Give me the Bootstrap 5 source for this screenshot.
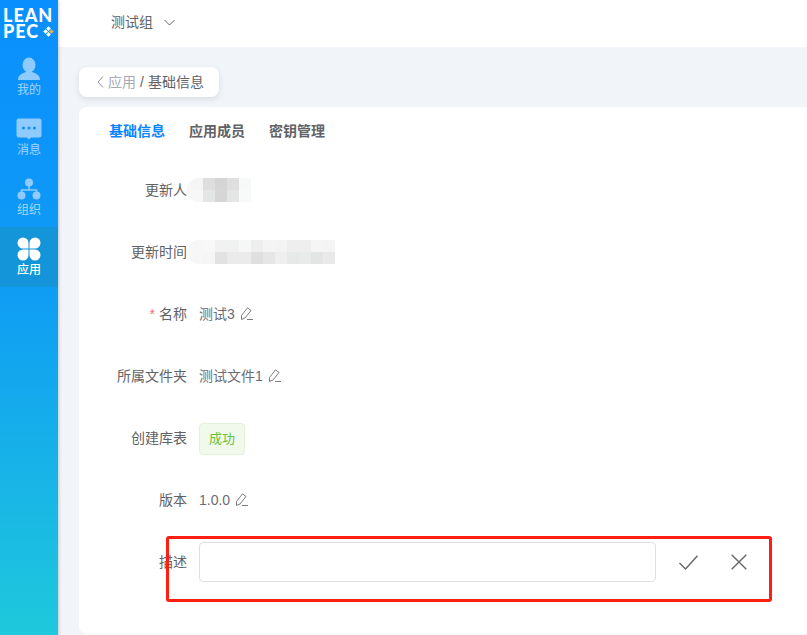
<!DOCTYPE html>
<html lang="zh">
<head>
<meta charset="utf-8">
<title>基础信息</title>
<link href="https://cdn.jsdelivr.net/npm/bootstrap@5.3.0/dist/css/bootstrap.min.css" rel="stylesheet">
<style>
html,body{height:100%;overflow:hidden}
body{font-family:"Liberation Sans","Noto Sans CJK SC",sans-serif;font-size:14px;line-height:20px;color:#606266;background:#f1f4f8}
.shell{height:635px}
.side{width:58px;flex:none;background:linear-gradient(180deg,#0a8ffe 0%,#0f9cf4 45%,#1fc8dc 100%);box-shadow:1px 0 3px rgba(0,0,0,.18);z-index:2}
.logo{height:47px;padding:7px 0 0 3px;color:#fff;font-family:"Lato","Liberation Sans",sans-serif;font-weight:900;font-size:18px;line-height:16px;letter-spacing:1px}
.logo-line{height:16px}
.snav{height:60px;padding-top:10px;color:#a5d5ff;font-size:12px;line-height:14px}
.snav svg{display:block;margin-bottom:2px}
.snav-on{background:#1495d9;color:#fff;font-weight:500}
.mainwrap{min-width:0}
.topbar{height:47px;padding:0 0 3px 53px;background:#fff;color:#606266}
.topbar svg{margin-left:11px}
.content{padding:20px 0 0 21px}
.crumb{height:30px;width:140px;padding:0 0 0 18px;background:#fff;border-radius:8px;box-shadow:0 2px 6px rgba(0,0,0,.1);margin-bottom:10px}
.crumb-link{color:#a8abb2;margin-left:4px}
.crumb-sep{margin:0 4px;color:#606266}
.panel{margin-right:-8px;background:#fff;border-radius:8px;height:527px;padding-left:30px}
.ptabs{height:52px;padding-bottom:4px;font-weight:700;gap:24px;color:#606266}
.ptab-on{color:#0a84ff}
.frow{height:62px;margin-left:-30px;position:relative}
.flabel{width:108px;flex:none;text-align:right;margin-right:12px}
.fval{color:#6b6d72}
.req{color:#f56c6c;margin-right:4px}
.pen{margin:0 0 2px 5px}
.stag{height:32px;width:46px;margin-top:2px;background:#f0f9eb;border:1px solid #e1f3d8;border-radius:4px;color:#67c23a;font-size:13px}
.finput{width:457px;height:40px;border:1px solid #dcdfe6;border-radius:4px;background:#fff;box-shadow:none}
.acts{margin-left:23px;gap:33px}
.redbox{position:absolute;left:87px;top:5px;width:606px;height:66px;border:3px solid #ff1e12;border-radius:3px;pointer-events:none}
.mosaic{display:grid;grid-template-rows:12px 12px;grid-auto-flow:column;grid-auto-columns:12px;margin-left:-12px;padding-left:4px;background:#f7f7f7;border-radius:12px 0 0 12px;overflow:hidden}
.mosaic i{display:block}
</style>
</head>
<body>
<div class="shell d-flex">
  <aside class="side d-flex flex-column">
    <div class="logo">
      <div class="logo-line">LEAN</div>
      <div class="logo-line d-flex align-items-center">PEC<svg width="11" height="11" viewBox="0 0 11 11" class="ms-1"><g transform="rotate(45 5.500 5.500)"><rect x="1.800" y="1.800" width="3.300" height="3.300" fill="#fff"/><rect x="5.900" y="1.800" width="3.300" height="3.300" fill="#f5b04a"/><rect x="1.800" y="5.900" width="3.300" height="3.300" fill="#fff"/><rect x="5.900" y="5.900" width="3.300" height="3.300" fill="#fff"/></g></svg></div>
    </div>
    <div class="snav d-flex flex-column align-items-center">
      <svg width="24" height="24" viewBox="0 0 24 24"><ellipse cx="12" cy="8" rx="6.500" ry="7.500" fill="#8fcbff"/><path d="M1 23c0-5 4-6.500 8-8h6c4 1.500 8 3 8 8z" fill="#8fcbff"/></svg>
      <span>我的</span>
    </div>
    <div class="snav d-flex flex-column align-items-center">
      <svg width="26" height="24" viewBox="0 0 26 24"><path d="M3 1.500h20a2.500 2.500 0 0 1 2.500 2.500v14a2.500 2.500 0 0 1-2.500 2.500h-8l-2 2-2-2H3A2.500 2.500 0 0 1 .5 18V4A2.500 2.500 0 0 1 3 1.500z" fill="#8fcbff"/><circle cx="7.500" cy="11" r="1.500" fill="#0d8ff0"/><circle cx="13" cy="11" r="1.500" fill="#0d8ff0"/><circle cx="18.500" cy="11" r="1.500" fill="#0d8ff0"/></svg>
      <span>消息</span>
    </div>
    <div class="snav d-flex flex-column align-items-center">
      <svg width="24" height="24" viewBox="0 0 24 24"><circle cx="12" cy="5.500" r="4" fill="#8fcbff"/><circle cx="4.500" cy="18.500" r="4" fill="#8fcbff"/><circle cx="19.500" cy="18.500" r="4" fill="#8fcbff"/><path d="M12 9v4M4.500 15v-2h15v2" fill="none" stroke="#8fcbff" stroke-width="1.600"/></svg>
      <span>组织</span>
    </div>
    <div class="snav snav-on d-flex flex-column align-items-center">
      <svg width="24" height="24" viewBox="0 0 24 24" fill="#fff"><path d="M11.500 11.500H6A5.500 5.500 0 1 1 11.500 6z"/><path d="M12.500 11.500H18A5.500 5.500 0 1 0 12.500 6z"/><path d="M11.500 12.500H6A5.500 5.500 0 1 0 11.500 18z"/><path d="M12.500 12.500H18A5.500 5.500 0 1 1 12.500 18z"/></svg>
      <span>应用</span>
    </div>
  </aside>
  <div class="mainwrap flex-grow-1 d-flex flex-column">
    <header class="topbar d-flex align-items-center">
      <span>测试组</span>
      <svg width="11" height="7" viewBox="0 0 11 7"><path d="M.5 1l5 5 5-5" fill="none" stroke="#606266"/></svg>
    </header>
    <main class="content flex-grow-1">
      <nav class="crumb d-flex align-items-center">
        <svg width="7" height="12" viewBox="0 0 7 12"><path d="M6 .5L1 6l5 5.500" fill="none" stroke="#8a8d94"/></svg>
        <span class="crumb-link">应用</span><span class="crumb-sep">/</span><span>基础信息</span>
      </nav>
      <section class="panel">
        <div class="ptabs d-flex align-items-center">
          <span class="ptab-on">基础信息</span><span>应用成员</span><span>密钥管理</span>
        </div>
        <div class="frow d-flex align-items-center">
          <div class="flabel">更新人</div>
          <div class="mosaic">
            <i style="background:#f5f5f5"></i><i style="background:#f7f7f7"></i>
            <i style="background:#dedede"></i><i style="background:#e4e5e5"></i>
            <i style="background:#d5d5d6"></i><i style="background:#d6d6d7"></i>
            <i style="background:#dfdfdf"></i><i style="background:#e4e5e5"></i>
            <i style="background:#f7f8f8"></i><i style="background:#f8f9f9"></i>
          </div>
        </div>
        <div class="frow d-flex align-items-center">
          <div class="flabel">更新时间</div>
          <div class="mosaic">
            <i style="background:#f7f7f7"></i><i style="background:#f7f7f7"></i>
            <i style="background:#f8f8f8"></i><i style="background:#f5f5f5"></i>
            <i style="background:#f1f1f1"></i><i style="background:#e2e2e3"></i>
            <i style="background:#f0f1f1"></i><i style="background:#ebebec"></i>
            <i style="background:#f5f6f6"></i><i style="background:#ebebeb"></i>
            <i style="background:#eeeeef"></i><i style="background:#dfdfe0"></i>
            <i style="background:#f4f4f4"></i><i style="background:#e6e6e7"></i>
            <i style="background:#f3f3f3"></i><i style="background:#eeeeee"></i>
            <i style="background:#eeeeef"></i><i style="background:#e7e8e8"></i>
            <i style="background:#eeeeef"></i><i style="background:#e9eaea"></i>
            <i style="background:#f5f5f5"></i><i style="background:#e3e4e4"></i>
            <i style="background:#f4f4f4"></i><i style="background:#e9e9ea"></i>
          </div>
        </div>
        <div class="frow d-flex align-items-center">
          <div class="flabel"><span class="req">*</span>名称</div>
          <span class="fval">测试3</span>
          <svg class="pen" width="13" height="13" viewBox="0 0 13 13" fill="none" stroke="#7a7c80"><path d="M1.500 12.500V8.500L7.500 .8 11 3.500 5 11z"/><path d="M7 12.500H13"/></svg>
        </div>
        <div class="frow d-flex align-items-center">
          <div class="flabel">所属文件夹</div>
          <span class="fval">测试文件1</span>
          <svg class="pen" width="13" height="13" viewBox="0 0 13 13" fill="none" stroke="#7a7c80"><path d="M1.500 12.500V8.500L7.500 .8 11 3.500 5 11z"/><path d="M7 12.500H13"/></svg>
        </div>
        <div class="frow d-flex align-items-center">
          <div class="flabel">创建库表</div>
          <span class="stag d-flex align-items-center justify-content-center">成功</span>
        </div>
        <div class="frow d-flex align-items-center">
          <div class="flabel">版本</div>
          <span class="fval">1.0.0</span>
          <svg class="pen" width="13" height="13" viewBox="0 0 13 13" fill="none" stroke="#7a7c80"><path d="M1.500 12.500V8.500L7.500 .8 11 3.500 5 11z"/><path d="M7 12.500H13"/></svg>
        </div>
        <div class="frow d-flex align-items-center">
          <div class="flabel">描述</div>
          <input type="text" class="form-control finput" aria-label="描述">
          <div class="acts d-flex align-items-center">
            <svg width="19" height="15" viewBox="0 0 19 15" fill="none" stroke="#666" stroke-width="1.400"><path d="M.5 8l6 6L18.500 .7"/></svg>
            <svg width="16" height="16" viewBox="0 0 16 16" fill="none" stroke="#666" stroke-width="1.400"><path d="M.7 .7l14.600 14.600M15.300 .7L.7 15.300"/></svg>
          </div>
          <div class="redbox"></div>
        </div>
      </section>
    </main>
  </div>
</div>
<script src="https://cdn.jsdelivr.net/npm/bootstrap@5.3.0/dist/js/bootstrap.bundle.min.js"></script>
</body>
</html>
